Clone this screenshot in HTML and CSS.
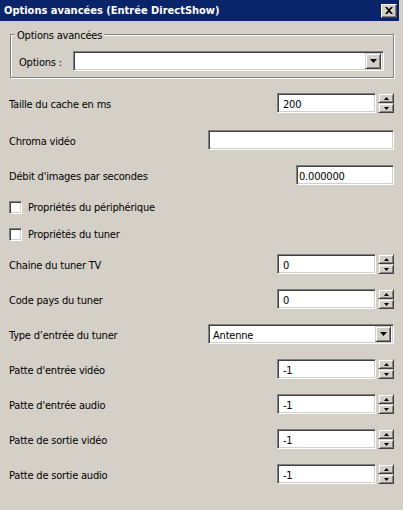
FILE: index.html
```html
<!DOCTYPE html>
<html lang="fr">
<head>
  <meta charset="UTF-8">
  <title>Options avancées (Entrée DirectShow)</title>
  <link rel="stylesheet" href="styles.css">
</head>
<body>
  <div class="window">
    <div class="titlebar">
      <span class="title">Options avancées (Entrée DirectShow)</span>
      <span class="close">
        <svg width="8" height="7" viewBox="0 0 8 7"><path d="M0 0h2l2 2 2-2h2L5 3.5 8 7H6L4 5 2 7H0l3-3.5z" fill="#000"/></svg>
      </span>
    </div>

    <div class="client">
      <div class="group">
        <span class="legend">Options avancées</span>
        <div class="group-row">
          <span class="label">Options :</span>
          <div class="combo combo-options">
            <span class="combo-text"></span>
            <span class="drop"><svg width="7" height="4" viewBox="0 0 7 4"><path d="M0 0h7L3.5 4z" fill="#000"/></svg></span>
          </div>
        </div>
      </div>

      <div class="row r-cache">
        <span class="label">Taille du cache en ms</span>
        <div class="spin">
          <div class="field">200</div>
          <div class="spin-btns">
            <span class="spin-btn"><svg width="5" height="3" viewBox="0 0 5 3"><path d="M2.5 0L5 3H0z" fill="#000"/></svg></span>
            <span class="spin-btn"><svg width="5" height="3" viewBox="0 0 5 3"><path d="M0 0h5L2.5 3z" fill="#000"/></svg></span>
          </div>
        </div>
      </div>

      <div class="row r-chroma">
        <span class="label">Chroma vidéo</span>
        <div class="field field-wide"></div>
      </div>

      <div class="row r-fps">
        <span class="label">Débit d'images par secondes</span>
        <div class="field field-fps">0.000000</div>
      </div>

      <label class="check c-dev"><span class="box"></span>Propriétés du périphérique</label>
      <label class="check c-tuner"><span class="box"></span>Propriétés du tuner</label>

      <div class="row r-tv">
        <span class="label">Chaine du tuner TV</span>
        <div class="spin">
          <div class="field">0</div>
          <div class="spin-btns">
            <span class="spin-btn"><svg width="5" height="3" viewBox="0 0 5 3"><path d="M2.5 0L5 3H0z" fill="#000"/></svg></span>
            <span class="spin-btn"><svg width="5" height="3" viewBox="0 0 5 3"><path d="M0 0h5L2.5 3z" fill="#000"/></svg></span>
          </div>
        </div>
      </div>

      <div class="row">
        <span class="label">Code pays du tuner</span>
        <div class="spin">
          <div class="field">0</div>
          <div class="spin-btns">
            <span class="spin-btn"><svg width="5" height="3" viewBox="0 0 5 3"><path d="M2.5 0L5 3H0z" fill="#000"/></svg></span>
            <span class="spin-btn"><svg width="5" height="3" viewBox="0 0 5 3"><path d="M0 0h5L2.5 3z" fill="#000"/></svg></span>
          </div>
        </div>
      </div>

      <div class="row">
        <span class="label">Type d’entrée du tuner</span>
        <div class="combo combo-type">
          <span class="combo-text">Antenne</span>
          <span class="drop"><svg width="7" height="4" viewBox="0 0 7 4"><path d="M0 0h7L3.5 4z" fill="#000"/></svg></span>
        </div>
      </div>

      <div class="row">
        <span class="label">Patte d'entrée vidéo</span>
        <div class="spin">
          <div class="field">-1</div>
          <div class="spin-btns">
            <span class="spin-btn"><svg width="5" height="3" viewBox="0 0 5 3"><path d="M2.5 0L5 3H0z" fill="#000"/></svg></span>
            <span class="spin-btn"><svg width="5" height="3" viewBox="0 0 5 3"><path d="M0 0h5L2.5 3z" fill="#000"/></svg></span>
          </div>
        </div>
      </div>

      <div class="row">
        <span class="label">Patte d'entrée audio</span>
        <div class="spin">
          <div class="field">-1</div>
          <div class="spin-btns">
            <span class="spin-btn"><svg width="5" height="3" viewBox="0 0 5 3"><path d="M2.5 0L5 3H0z" fill="#000"/></svg></span>
            <span class="spin-btn"><svg width="5" height="3" viewBox="0 0 5 3"><path d="M0 0h5L2.5 3z" fill="#000"/></svg></span>
          </div>
        </div>
      </div>

      <div class="row">
        <span class="label">Patte de sortie vidéo</span>
        <div class="spin">
          <div class="field">-1</div>
          <div class="spin-btns">
            <span class="spin-btn"><svg width="5" height="3" viewBox="0 0 5 3"><path d="M2.5 0L5 3H0z" fill="#000"/></svg></span>
            <span class="spin-btn"><svg width="5" height="3" viewBox="0 0 5 3"><path d="M0 0h5L2.5 3z" fill="#000"/></svg></span>
          </div>
        </div>
      </div>

      <div class="row">
        <span class="label">Patte de sortie audio</span>
        <div class="spin">
          <div class="field">-1</div>
          <div class="spin-btns">
            <span class="spin-btn"><svg width="5" height="3" viewBox="0 0 5 3"><path d="M2.5 0L5 3H0z" fill="#000"/></svg></span>
            <span class="spin-btn"><svg width="5" height="3" viewBox="0 0 5 3"><path d="M0 0h5L2.5 3z" fill="#000"/></svg></span>
          </div>
        </div>
      </div>
    </div>
  </div>
</body>
</html>
```

FILE: styles.css
```css
html, body { margin: 0; padding: 0; background: #d4d0c8; }
body {
  font-family: "DejaVu Sans Condensed", "Liberation Sans", sans-serif;
  font-size: 11px;
  letter-spacing: -0.2px;
  color: #000;
}
.window { width: 403px; height: 510px; overflow: hidden; }

/* title bar */
.titlebar {
  width: 399px;
  height: 21px;
  background: #0a246a;
  display: flex;
  align-items: center;
  justify-content: space-between;
  box-sizing: border-box;
  padding: 0 2px 0 4px;
}
.title {
  color: #fff;
  font-weight: bold;
  font-size: 11px;
  letter-spacing: 0;
}
.close {
  width: 16px;
  height: 14px;
  box-sizing: border-box;
  background: #d4d0c8;
  border: 1px solid;
  border-color: #fff #404040 #404040 #fff;
  box-shadow: inset -1px -1px 0 #808080;
  display: flex;
  align-items: center;
  justify-content: center;
}

.client { padding: 0 9px 0 9px; }

/* group box */
.group {
  position: relative;
  margin: 13px 0 0 1px;
  width: 384px;
  height: 44px;
  box-sizing: border-box;
  padding: 16px 0 0 8px;
  border: 1px solid #808080;
  box-shadow: inset 1px 1px 0 #fff, 1px 1px 0 #fff;
}
.legend {
  position: absolute;
  top: -6px;
  left: 4px;
  padding: 0 2px;
  line-height: 13px;
  background: #d4d0c8;
}
.group-row {
  display: flex;
  align-items: center;
}
.group-row .label { width: 54px; }
.label { padding-top: 3px; }

/* sunken controls */
.field, .combo, .box {
  box-sizing: border-box;
  background: #fff;
  border: 1px solid;
  border-color: #808080 #fff #fff #808080;
  box-shadow: inset 1px 1px 0 #404040, inset -1px -1px 0 #d4d0c8;
}
.field {
  height: 20px;
  line-height: 15px;
  padding: 3px 0 0 5px;
}
.combo {
  height: 20px;
  display: flex;
  align-items: center;
  justify-content: space-between;
  padding: 0 2px 0 4px;
}
.combo-text { padding-top: 2px; }
.combo-options { width: 311px; }
.combo-type { width: 186px; }

/* raised buttons */
.drop, .spin-btn {
  box-sizing: border-box;
  background: #d4d0c8;
  border: 1px solid;
  border-color: #d4d0c8 #404040 #404040 #d4d0c8;
  box-shadow: inset 1px 1px 0 #fff, inset -1px -1px 0 #808080;
  display: flex;
  align-items: center;
  justify-content: center;
}
.drop { width: 16px; height: 16px; }

/* rows */
.row {
  display: flex;
  align-items: center;
  justify-content: space-between;
  height: 20px;
  margin-top: 15px;
}
.r-chroma { margin-top: 17px; }
.r-tv { margin-top: 13px; }

.spin { display: flex; gap: 2px; }
.spin .field { width: 99px; }
.spin-btns { display: flex; flex-direction: column; justify-content: space-between; height: 20px; }
.spin-btn { width: 16px; height: 10px; }
.field-wide { width: 186px; }
.field-fps { width: 98px; padding-left: 2px; }

/* checkboxes */
.check {
  display: flex;
  align-items: center;
  height: 13px;
  gap: 6px;
  margin-top: 16px;
}
.c-tuner { margin-top: 14px; }
.box { width: 13px; height: 13px; }
```
